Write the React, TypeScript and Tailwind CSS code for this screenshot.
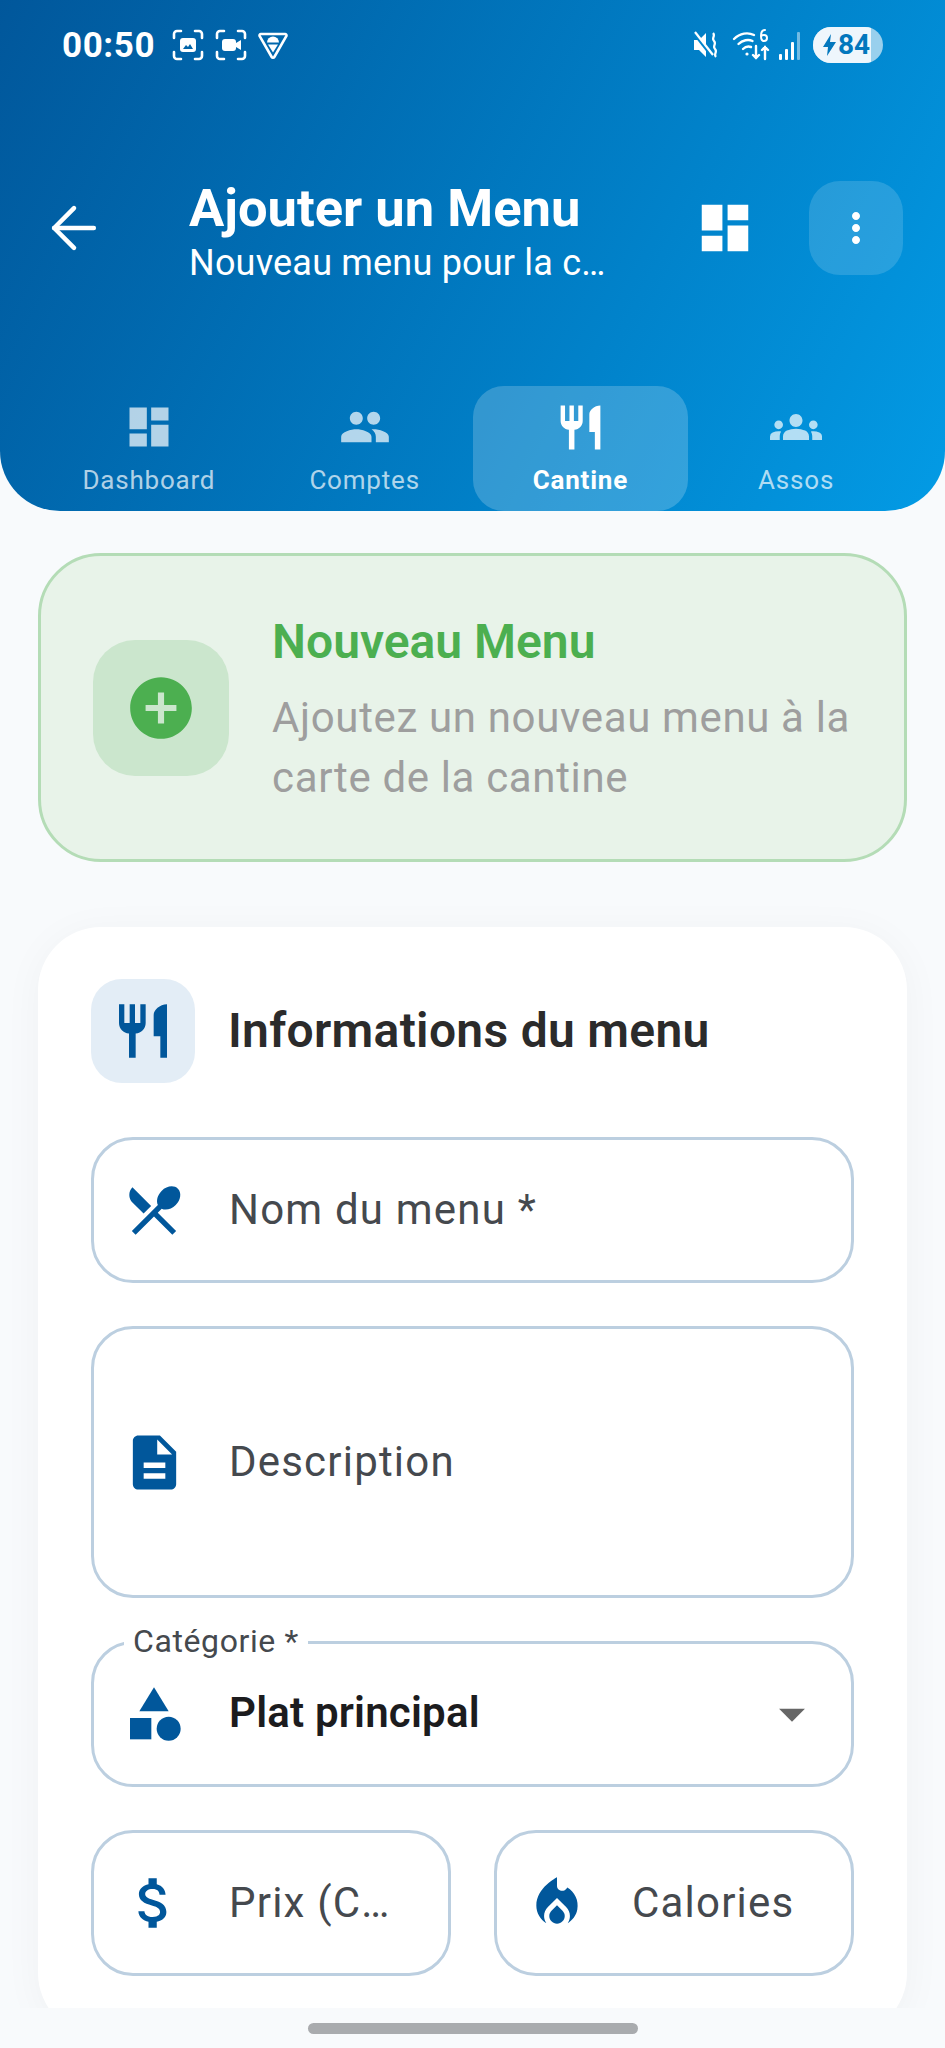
import type { ReactNode } from 'react';
import { ArrowLeft } from 'lucide-react';
import {
  MdAddCircle,
  MdArrowDropDown,
  MdAttachMoney,
  MdCategory,
  MdDashboard,
  MdDescription,
  MdGroups,
  MdLocalFireDepartment,
  MdMoreVert,
  MdPeople,
  MdRestaurant,
  MdRestaurantMenu,
} from 'react-icons/md';

const tabs = [
  { label: 'Dashboard', icon: <MdDashboard className="w-[52px] h-[52px]" /> },
  { label: 'Comptes', icon: <MdPeople className="w-[52px] h-[52px]" /> },
  { label: 'Cantine', icon: <MdRestaurant className="w-[53px] h-[53px]" />, active: true },
  { label: 'Assos', icon: <MdGroups className="w-[52px] h-[52px]" /> },
];

function StatusBar() {
  return (
    <div className="flex items-center justify-between h-[50px] pl-[62px] pr-[62px] mt-[20px] text-white">
      <div className="flex items-center gap-[17px]">
        <span className="text-[35px] font-bold tracking-[0.6px] leading-none">00:50</span>
        <div className="flex items-center gap-[11px]">
          <svg width="32" height="32" viewBox="0 0 32 32" fill="none" stroke="white" strokeWidth="2.6" strokeLinecap="round">
            <path d="M2 9V5a3 3 0 0 1 3-3h4M23 2h4a3 3 0 0 1 3 3v4M30 23v4a3 3 0 0 1-3 3h-4M9 30H5a3 3 0 0 1-3-3v-4" />
            <rect x="8" y="9" width="16" height="14" rx="3" fill="white" stroke="none" />
            <path d="M11 20l3-4 2 2 2-3 3 5z" fill="#0164a8" stroke="none" />
          </svg>
          <svg width="32" height="32" viewBox="0 0 32 32" fill="none" stroke="white" strokeWidth="2.6" strokeLinecap="round">
            <path d="M2 9V5a3 3 0 0 1 3-3h4M23 2h4a3 3 0 0 1 3 3v4M30 23v4a3 3 0 0 1-3 3h-4M9 30H5a3 3 0 0 1-3-3v-4" />
            <rect x="7" y="10" width="14" height="12" rx="3" fill="white" stroke="none" />
            <path d="M21 14l5-3v10l-5-3z" fill="white" stroke="none" />
          </svg>
          <svg width="30" height="30" viewBox="0 0 30 30" fill="none">
            <path d="M3 4h24a1.5 1.5 0 0 1 1.3 2.2L16.3 27a1.5 1.5 0 0 1-2.6 0L1.700 6.200A1.500 1.500 0 0 1 3 4z" stroke="white" strokeWidth="2.6" strokeLinejoin="round" />
            <path d="M9 12.500a6 6 0 0 1 12 0z" fill="white" />
            <path d="M10 14.500h10l-5 8z" fill="white" />
          </svg>
        </div>
      </div>
      <div className="flex items-center">
        <svg width="28" height="32" viewBox="0 0 28 32" fill="white">
          <path d="M1 11h5l7-7v24l-7-7H1z" />
          <path d="M1 4l18 23" stroke="#0284cc" strokeWidth="3.500" />
          <path d="M2 3l18 23" stroke="white" strokeWidth="2.200" />
          <path d="M20 4c3 3-2 5 1 8s-2 5 1 8-2 5 1 8" fill="none" stroke="white" strokeWidth="2.200" />
        </svg>
        <svg className="ml-[11px]" width="40" height="34" viewBox="0 0 40 34" fill="none" stroke="white" strokeWidth="2.400" strokeLinecap="round">
          <path d="M2 11c6-6 14-7 20-4" />
          <path d="M6.500 16c4-4 10-5 14-3" />
          <path d="M11 21c2-2 5-3 8-2" />
          <circle cx="15" cy="26" r="1.600" fill="white" stroke="none" />
          <path d="M24 18v12m-3-3l3 3 3-3M33 31V19m-3 3l3-3 3 3" />
          <path d="M33 2c-3 0-4 2-4 6s1 5 3 5 3-1 3-3-1-3-3-3-3 1-3 2" strokeWidth="2" />
        </svg>
        <svg className="ml-[6px]" width="26" height="32" viewBox="0 0 26 32" fill="white">
          <rect x="1" y="25" width="3" height="6" rx="1" />
          <rect x="7" y="20" width="3" height="11" rx="1" />
          <rect x="13" y="13" width="3" height="18" rx="1" />
          <rect x="19" y="3" width="3" height="28" rx="1" fill="#ffffff" fillOpacity="0.45" />
        </svg>
        <div className="relative ml-[9px] w-[70px] h-[36px] rounded-full bg-white/60 overflow-hidden">
          <div className="absolute inset-y-0 left-0 w-[58px] bg-[#eef6fc]" />
          <div className="absolute inset-0 flex items-center pl-[9px] text-[#0277bd]">
            <svg width="15" height="24" viewBox="0 0 15 24" fill="currentColor">
              <path d="M9 1L1 14h5l-1 9 9-14H8z" />
            </svg>
            <span className="text-[28px] font-bold leading-none ml-[1px]">84</span>
          </div>
        </div>
      </div>
    </div>
  );
}

function Header() {
  return (
    <header className="bg-linear-118 from-[#01579b] to-[#039be5] rounded-b-[60px] h-[511px] shrink-0 overflow-hidden flex flex-col">
      <StatusBar />
      <div className="flex items-center h-[94px] mt-[111px] pl-[40px] pr-[42px] text-white">
        <ArrowLeft className="w-[68px] h-[68px] shrink-0" strokeWidth={1.600} />
        <div className="ml-[81px] flex-1 min-w-0 pt-[10px]">
          <h1 className="text-[52.5px] leading-[60px] font-bold">Ajouter un Menu</h1>
          <p className="text-[36px] leading-[51px] tracking-[0.2px]">Nouveau menu pour la c…</p>
        </div>
        <MdDashboard className="w-[62px] h-[62px] mr-[53px] shrink-0" />
        <button className="w-[94px] h-[94px] rounded-[31px] bg-white/15 flex items-center justify-center shrink-0">
          <MdMoreVert className="w-[48px] h-[48px]" />
        </button>
      </div>
      <nav className="grid grid-cols-4 mt-[111px] mx-[41px] flex-1">
        {tabs.map((tab) => (
          <div
            key={tab.label}
            className={`flex flex-col items-center pt-[9px] rounded-[31px] ${
              tab.active ? 'bg-white/20 text-white font-bold' : 'text-white/70'
            }`}
          >
            <div className="h-[64px] flex items-center justify-center">{tab.icon}</div>
            <span className="text-[26px] leading-[30px] tracking-[0.8px] mt-[6px]">{tab.label}</span>
          </div>
        ))}
      </nav>
    </header>
  );
}

function Field({ icon, label, className }: { icon: ReactNode; label: string; className?: string }) {
  return (
    <div className={`flex items-center h-[146px] pl-[33px] pr-[32px] border-[3px] border-[#bccfe0] rounded-[42px] min-w-0 ${className ?? ''}`}>
      <div className="w-[54px] flex justify-center text-[#01579b] shrink-0">{icon}</div>
      <span className="ml-[48px] pb-[2px] text-[42px] tracking-[1.2px] text-[#45494e] whitespace-nowrap">{label}</span>
    </div>
  );
}

export default function App() {
  return (
    <div className="w-[945px] h-[2048px] overflow-hidden flex flex-col bg-[#f8fafc] font-['Roboto',sans-serif]">
      <Header />
      <main className="flex-1 min-h-0 overflow-hidden px-[38px] pt-[42px]">
        {/* Banner */}
        <section className="flex items-center h-[309px] pl-[52px] pr-[30px] bg-[#e8f3e9] border-[3px] border-[#b4dcb6] rounded-[63px]">
          <div className="w-[136px] h-[136px] rounded-[42px] bg-[#cbe6cd] flex items-center justify-center shrink-0">
            <MdAddCircle className="w-[74px] h-[74px] text-[#4caf50]" />
          </div>
          <div className="ml-[43px] pt-[7px]">
            <h2 className="text-[48px] leading-[56px] font-semibold text-[#4caf50]">Nouveau Menu</h2>
            <p className="text-[42px] leading-[60px] tracking-[0.65px] text-[#9e9e9e] mt-[18px]">
              Ajoutez un nouveau menu à la carte de la cantine
            </p>
          </div>
        </section>

        {/* Form card */}
        <section className="mt-[65px] bg-white rounded-[63px] shadow-[0_5px_40px_rgba(0,0,0,0.04)] px-[53px] pt-[52px] pb-[60px]">
          <div className="flex items-center">
            <div className="w-[104px] h-[104px] rounded-[31px] bg-[#e3edf6] flex items-center justify-center shrink-0">
              <MdRestaurant className="w-[64px] h-[64px] text-[#01579b]" />
            </div>
            <h3 className="ml-[33px] text-[48px] font-semibold text-[#2b2b2b] tracking-[0.3px]">Informations du menu</h3>
          </div>

          <div className="mt-[54px] flex flex-col gap-[43px]">
            <Field icon={<MdRestaurantMenu className="w-[64px] h-[64px] shrink-0" />} label="Nom du menu *" />
            <Field icon={<MdDescription className="w-[65px] h-[65px] shrink-0" />} label="Description" className="h-[272px]" />

            <div className="relative flex items-center h-[146px] pl-[36px] pr-[40px] border-[3px] border-[#bccfe0] rounded-[42px]">
              <span className="absolute -top-[21px] left-[30px] px-[9px] bg-white text-[32px] leading-[36px] tracking-[0.6px] text-[#45494e]">
                Catégorie *
              </span>
              <MdCategory className="w-[64px] h-[64px] -ml-[8px] text-[#01579b] shrink-0" />
              <span className="ml-[43px] pb-[4px] flex-1 text-[42px] font-semibold tracking-[0.2px] text-[#1c1c1e]">Plat principal</span>
              <MdArrowDropDown className="w-[62px] h-[62px] -mr-[12px] text-[#666666]" />
            </div>

            <div className="grid grid-cols-2 gap-[43px]">
              <Field icon={<MdAttachMoney className="w-[66px] h-[66px] shrink-0" />} label="Prix (C…" />
              <Field icon={<MdLocalFireDepartment className="w-[62px] h-[62px] shrink-0" />} label="Calories" />
            </div>
          </div>
        </section>
      </main>

      {/* Gesture bar */}
      <div className="h-[40px] shrink-0 bg-[#f8fafc] flex justify-center pt-[15px]">
        <div className="w-[330px] h-[11px] rounded-full bg-[#a9abae]" />
      </div>
    </div>
  );
}
